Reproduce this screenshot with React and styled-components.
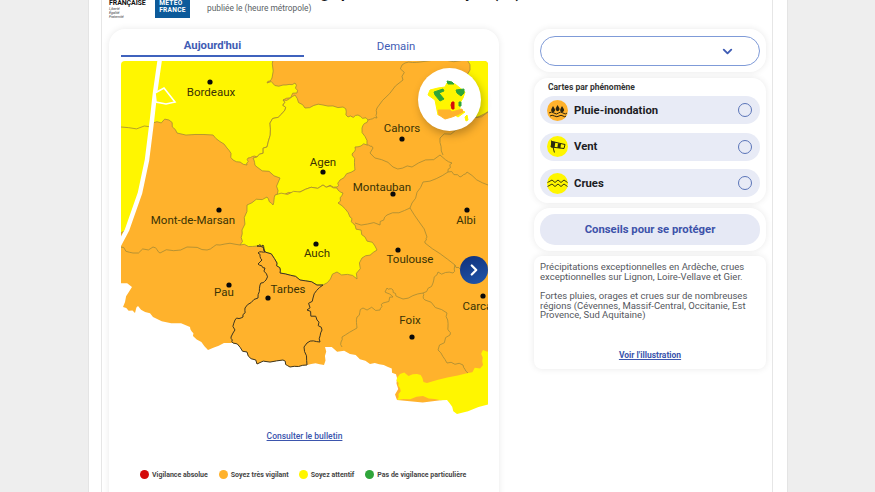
import React from "react";
import styled, { createGlobalStyle } from "styled-components";
import { ChevronDown, ChevronRight } from "lucide-react";

const YELLOW = "#fff600";
const ORANGE = "#ffb22c";
const LINE = "#a58a35";

const GlobalStyle = createGlobalStyle`
  html, body {
    margin: 0;
    height: 492px;
    overflow: hidden;
    background: #eeeeee;
    font-family: Roboto, "Liberation Sans", sans-serif;
  }
`;

const Page = styled.div`
  display: flow-root;
  width: 875px;
  height: 492px;
  overflow: hidden;
`;

const Sheet = styled.div`
  width: 700px;
  height: 501px;
  margin: -9px 0 0 88px;
  padding: 0 14px 0 12px;
  box-sizing: border-box;
  background: #fff;
  border-left: 1px solid #e4e4e4;
  border-right: 1px solid #e4e4e4;
`;

const Inner = styled.div`
  height: 100%;
  padding: 0 5px 0 7px;
  border-left: 1px solid #e6e6e6;
  border-right: 1px solid #e6e6e6;
`;

const Header = styled.header`
  display: flex;
  height: 29px;
  margin-bottom: 9px;
`;

const Republic = styled.div`
  width: 46px;
  color: #111;
  font-size: 7px;
  font-weight: 700;
  line-height: 8px;
  margin-top: 7.5px;
  letter-spacing: -0.1px;
`;

const Motto = styled.div`
  font-size: 3.8px;
  font-weight: 400;
  font-style: italic;
  line-height: 4.4px;
  color: #444;
`;

const MeteoLogo = styled.div`
  display: flex;
  flex-direction: column;
  justify-content: flex-end;
  align-items: center;
  width: 35px;
  height: 27px;
  margin-right: 17px;
  padding-bottom: 4.5px;
  box-sizing: border-box;
  background: #0c5a9a;
  color: #fff;
  font-size: 6.6px;
  font-weight: 700;
  line-height: 7px;
  letter-spacing: 0.3px;
`;

const Titles = styled.div`
  white-space: nowrap;
`;

const PageTitle = styled.div`
  height: 18px;
  margin-top: -3px;
  font-size: 15px;
  font-weight: 700;
  line-height: 11px;
  color: #111;
`;

const Published = styled.div`
  font-size: 8.4px;
  line-height: 11px;
  margin-top: -3px;
  color: #5a5f66;
`;

const Main = styled.main`
  display: grid;
  grid-template-columns: 390px 232px;
  column-gap: 35px;
  align-items: start;
`;

const Card = styled.section`
  background: #fff;
  border-radius: 14px;
  box-shadow: 0 0 7px rgba(0, 0, 0, 0.09);
`;

const MapCard = styled(Card)`
  height: 480px;
  padding: 0 11px 0 12px;
  border-radius: 16px;
`;

const Tabs = styled.div`
  display: grid;
  grid-template-columns: 183px 184px;
  height: 32px;
`;

const Tab = styled.div`
  display: flex;
  align-items: center;
  justify-content: center;
  height: 25px;
  margin-top: 3px;
  padding-top: 4px;
  box-sizing: border-box;
  font-size: 11.3px;
  font-weight: ${(p) => (p.$active ? 700 : 400)};
  color: #3f5cb4;
  border-bottom: ${(p) => (p.$active ? "2px solid #3f62bd" : "none")};
`;

const MapBox = styled.div`
  position: relative;
  width: 367px;
  height: 360px;
`;

const MapSvg = styled.svg`
  display: block;
  border-radius: 4px 4px 0 0;
`;

const CityLabel = styled.text`
  font-family: Roboto, sans-serif;
  font-size: 11.5px;
  fill: #3a3205;
`;

const MiniMap = styled.div`
  position: absolute;
  top: 7px;
  left: 297px;
  width: 63px;
  height: 63px;
  border-radius: 50%;
  background: #fff;
  box-shadow: 2px 4px 9px rgba(0, 0, 0, 0.25);
`;

const NextButton = styled.div`
  position: absolute;
  top: 195px;
  right: 0;
  display: flex;
  align-items: center;
  justify-content: center;
  width: 28px;
  height: 28px;
  border-radius: 50%;
  background: linear-gradient(160deg, #10307a, #2056ab);
  color: #fff;
`;

const BulletinLink = styled.a`
  display: block;
  margin-top: 9px;
  text-align: center;
  font-size: 8.5px;
  font-weight: 500;
  line-height: 12px;
  color: #3b55ad;
  text-decoration: underline;
`;

const Legend = styled.div`
  display: flex;
  margin: 28px 0 0 19px;
  white-space: nowrap;
`;

const LegendItem = styled.div`
  display: flex;
  align-items: center;
  gap: 3px;
  margin-right: ${(p) => p.$gap}px;
  font-size: 7px;
  font-weight: 700;
  color: #454545;
`;

const Dot = styled.span`
  width: 9px;
  height: 9px;
  border-radius: 50%;
  background: ${(p) => p.$color};
`;

const Side = styled.aside`
  display: flex;
  flex-direction: column;
  gap: 6px;
`;

const SelectCard = styled(Card)`
  height: 43px;
  padding: 7px 6px;
  box-sizing: border-box;
  border-radius: 16px;
`;

const SelectBox = styled.div`
  display: flex;
  align-items: center;
  justify-content: flex-end;
  height: 28px;
  padding-right: 24px;
  border: 1.5px solid #7f9bd8;
  border-radius: 15px;
  color: #3f5cb4;
`;

const PhenomenaCard = styled(Card)`
  height: 125px;
  padding: 4px 6px 0;
  box-sizing: border-box;
`;

const CardTitle = styled.div`
  margin-left: 8px;
  font-size: 8.5px;
  font-weight: 700;
  line-height: 11px;
  color: #333;
`;

const Rows = styled.div`
  display: flex;
  flex-direction: column;
  gap: 8.5px;
  margin-top: 3px;
`;

const Row = styled.div`
  display: flex;
  align-items: center;
  height: 28px;
  padding: 0 8px 0 7px;
  background: #e8ebf6;
  border-radius: 14px;
  font-size: 11.3px;
  font-weight: 700;
  color: #1c1c24;
`;

const Glyph = styled.svg`
  flex: none;
  margin-right: 6px;
`;

const RowName = styled.span`
  flex: 1;
`;

const Radio = styled.span`
  width: 12px;
  height: 12px;
  border: 1px solid #5a74b8;
  border-radius: 50%;
`;

const AdviceCard = styled(Card)`
  height: 43px;
  margin-top: -1px;
  padding: 6px;
  box-sizing: border-box;
  border-radius: 16px;
`;

const AdviceButton = styled.div`
  display: flex;
  align-items: center;
  justify-content: center;
  height: 31px;
  border-radius: 15px;
  background: #e6e9f5;
  font-size: 11.3px;
  font-weight: 700;
  color: #3d52aa;
`;

const TextCard = styled(Card)`
  height: 113px;
  margin-top: -1px;
  padding: 6px 6px 0;
  box-sizing: border-box;
  border-radius: 8px;
`;

const Paragraph = styled.p`
  margin: 0 0 9.5px;
  font-size: 9.5px;
  line-height: 9.7px;
  color: #55585e;
`;

const IllustrationLink = styled.a`
  display: block;
  margin-top: 29px;
  text-align: center;
  font-size: 8.5px;
  font-weight: 700;
  line-height: 12px;
  color: #3b55ad;
  text-decoration: underline;
`;

// small repeatable bumps so the borders don't look like straight cuts
const frac = (n) => n - Math.floor(n);
const wiggle = (list, closed = true) => {
  const out = [];
  list.forEach((a, i) => {
    out.push(a);
    const b = list[(i + 1) % list.length];
    if (!closed && i === list.length - 1) return;
    const flip = a[0] > b[0] || (a[0] === b[0] && a[1] > b[1]);
    const [p, q] = flip ? [b, a] : [a, b];
    const dx = q[0] - p[0];
    const dy = q[1] - p[1];
    const len = Math.hypot(dx, dy);
    if (len < 6) return;
    const steps = [0.25, 0.5, 0.75].map((t) => {
      const r = frac(Math.sin(p[0] * 12.9 + p[1] * 78.2 + q[0] * 37.7 + q[1] * 9.1 + t * 7) * 43758) - 0.5;
      const size = r * Math.min(len * 0.3, 4);
      return [p[0] + dx * t - (dy / len) * size, p[1] + dy * t + (dx / len) * size];
    });
    out.push(...(flip ? steps.reverse() : steps));
  });
  return out;
};

const pts = (list) => list.map((p) => p.join(",")).join(" ");

const land = [
  [158, 50], [500, 50], [500, 402], [397, 400], [397, 378], [388, 367], [370, 364], [350, 354], [325, 347],
  [324, 365], [307, 365], [290, 367], [283, 360], [257, 364], [247, 352], [233, 343], [230, 343], [208, 350],
  [193, 336], [190, 327], [153, 317], [138, 306], [135, 313], [123, 307], [132, 287], [110, 279],
  [110, 243], [127, 230], [140, 193], [147, 160], [152, 120], [155, 93]
];

const gironde = [
  [110, 50], [275, 50], [272, 78], [267, 83], [283, 85], [295, 83], [297, 93], [283, 100], [285, 110],
  [270, 123], [267, 147], [257, 157], [248, 158], [247, 165], [233, 160], [227, 148], [213, 135],
  [177, 133], [169, 120], [153, 123], [147, 160], [140, 193], [127, 230], [110, 245]
];

const lotGaronne = [
  [295, 95], [305, 108], [323, 105], [343, 107], [348, 117], [358, 115], [368, 120], [362, 128],
  [367, 145], [355, 147], [352, 155], [355, 170], [340, 180], [337, 187], [323, 185], [300, 192],
  [277, 195], [280, 178], [257, 167], [253, 158], [257, 157], [267, 147], [270, 123], [285, 110],
  [283, 100]
];

const gers = [
  [247, 205], [267, 197], [273, 205], [275, 195], [300, 192], [323, 185], [337, 188], [343, 193],
  [338, 203], [350, 217], [355, 225], [365, 237], [377, 250], [362, 258], [357, 279], [337, 272],
  [323, 285], [300, 280], [280, 273], [277, 263], [263, 247], [257, 246], [240, 245], [242, 230]
];

const south = [
  [397, 378], [400, 374], [417, 374], [427, 383], [468, 373], [483, 365], [483, 350], [500, 350],
  [500, 400], [457, 414], [447, 400], [423, 396], [397, 400], [400, 388]
];

const northEast = [[465, 50], [500, 50], [500, 108], [470, 118], [460, 100], [470, 70]];

const tarbes = [
  [257, 246], [263, 245], [265, 252], [258, 253], [262, 260], [258, 264], [265, 268], [266, 280],
  [260, 285], [258, 298], [245, 308], [243, 317], [235, 320], [233, 333], [231, 337], [233, 343],
  [247, 352], [257, 364], [283, 360], [290, 367], [307, 365], [304, 347], [307, 343], [320, 342],
  [322, 330], [317, 320], [307, 310], [313, 298], [323, 285], [300, 280], [280, 273], [277, 263],
  [263, 247]
];

const borders = [
  [[120, 247], [133, 253], [153, 247], [160, 253], [187, 247], [207, 250], [220, 245], [240, 245]],
  [[368, 120], [377, 118], [377, 108], [403, 80], [402, 65], [405, 63], [420, 62], [465, 60]],
  [[367, 145], [373, 148], [370, 153], [393, 167], [412, 167], [440, 155], [452, 163], [448, 172], [460, 177], [467, 172], [488, 185]],
  [[440, 138], [443, 155]],
  [[440, 138], [460, 127], [488, 112]],
  [[448, 172], [423, 182], [412, 203], [410, 208], [387, 215], [380, 225], [355, 223]],
  [[410, 208], [427, 237], [425, 243], [455, 265], [453, 273], [438, 272], [433, 283], [423, 293], [403, 299], [398, 297], [393, 290], [387, 288], [385, 292], [393, 297], [383, 303], [380, 310], [363, 308], [357, 317], [357, 328], [342, 337], [342, 347]],
  [[423, 293], [425, 300], [447, 313], [448, 327], [450, 335], [438, 350], [447, 363], [463, 365], [468, 373]],
  [[455, 265], [462, 271]],
  [[121, 127], [152, 127]]
];

const cities = [
  { name: "Bordeaux", dot: [210, 82], label: [211, 96] },
  { name: "Cahors", dot: [402, 139], label: [402, 132] },
  { name: "Agen", dot: [323, 172], label: [323, 166] },
  { name: "Montauban", dot: [393, 194], label: [382, 191] },
  { name: "Mont-de-Marsan", dot: [219, 210], label: [193, 224] },
  { name: "Albi", dot: [467, 210], label: [466, 224] },
  { name: "Auch", dot: [316, 244], label: [317, 257] },
  { name: "Toulouse", dot: [398, 250], label: [410, 263] },
  { name: "Pau", dot: [229, 285], label: [224, 296] },
  { name: "Tarbes", dot: [268, 298], label: [288, 293] },
  { name: "Foix", dot: [412, 337], label: [410, 324] },
  { name: "Carcassonne", dot: [483, 296], label: [496, 310] },
  { name: "Périgueux", dot: [338, 40], label: [344, 59] },
  { name: "Perpignan", dot: [510, 360], label: [514, 379] }
];

const legend = [
  { color: "#d40b0b", label: "Vigilance absolue", gap: 11 },
  { color: ORANGE, label: "Soyez très vigilant", gap: 10 },
  { color: "#fff600", label: "Soyez attentif", gap: 11 },
  { color: "#2fa53a", label: "Pas de vigilance particulière", gap: 0 }
];

const WarningMap = () => (
  <MapSvg width="367" height="360" viewBox="121 61 367 360">
    <rect x="121" y="61" width="367" height="360" fill="#fff" />
    <polygon points={pts(wiggle(land))} fill={ORANGE} />
    {[gironde, lotGaronne, gers, northEast].map((shape, i) => (
      <polygon key={i} points={pts(wiggle(shape))} fill={YELLOW} stroke={LINE} strokeWidth="0.8" />
    ))}
    <polygon points={pts(wiggle(south))} fill={YELLOW} />
    {borders.map((line, i) => (
      <polyline key={i} points={pts(wiggle(line, false))} fill="none" stroke={LINE} strokeWidth="0.8" />
    ))}
    <polygon points={pts(wiggle(tarbes))} fill={ORANGE} stroke="#3c3520" strokeWidth="1" />
    <polyline points="160,58 155,93 152,120 147,160 140,193 127,230 119,245" fill="none" stroke="#fff" strokeWidth="4.5" strokeLinejoin="round" />
    <path d="M155 93 L164 88 L175 102 L166 104 L156 102 Z" fill={YELLOW} stroke="#fff" strokeWidth="1.6" />
    {cities.map((c) => (
      <g key={c.name}>
        <circle cx={c.dot[0]} cy={c.dot[1]} r="2.6" fill="#0a0a0a" />
        <CityLabel x={c.label[0]} y={c.label[1]} textAnchor="middle">{c.name}</CityLabel>
      </g>
    ))}
  </MapSvg>
);

const MiniFrance = () => (
  <svg width="63" height="63" viewBox="0 0 63 63" strokeLinejoin="round">
    <polygon points="29,15 37,16 47,24 45,30 42,35 42,42 47,44 40,49 37,47 20,47 17,32 10,27 12,22 20,20 27,19" fill={YELLOW} stroke={YELLOW} />
    <polygon points="29,13 34,14 36,16 30,16" fill="#2fa53a" stroke="#2fa53a" />
    <polygon points="16,24 25,21 26,23 21,25 26,31 22,33 17,27" fill="#2fa53a" stroke="#2fa53a" />
    <polygon points="38,22 46,21 46,25 43,28 39,25" fill="#2fa53a" stroke="#2fa53a" />
    <polygon points="41,34 43,34 43,38 41,38" fill="#2fa53a" stroke="#2fa53a" />
    <polygon points="20,42 32,42 34,44 44,41 45,44 39,47 34,49 27,51 21,47" fill={ORANGE} stroke={ORANGE} />
    <polygon points="34,34 36,34 36,41 34,41 33,37" fill="#d40b0b" stroke="#d40b0b" />
    <polygon points="49,47 50,52 48,53 47,49" fill={YELLOW} stroke={YELLOW} />
  </svg>
);

const RainIcon = () => (
  <Glyph width="21" height="21" viewBox="0 0 21 21">
    <circle cx="10.5" cy="10.5" r="10.5" fill={ORANGE} />
    <path d="M6 6 L7.8 9 A2 2 0 1 1 4.4 9 Z M10.5 5 L12.3 8 A2 2 0 1 1 8.9 8 Z M15 6 L16.8 9 A2 2 0 1 1 13.4 9 Z" fill="#2a2410" />
    <path d="M2 13 Q4.5 11 7 13 T11.5 13 T16 13 T20 13 M3 16 Q5 14.5 7.5 16 T12 16 T16 16 T19 16" fill="none" stroke="#2a2410" strokeWidth="1" />
  </Glyph>
);

const WindIcon = () => (
  <Glyph width="21" height="21" viewBox="0 0 21 21">
    <circle cx="10.5" cy="10.5" r="10.5" fill={YELLOW} />
    <path d="M5 5.5 L18 8.5 L17 12.5 L4 11 Z" fill={YELLOW} stroke="#2a2a10" strokeWidth="1" />
    <path d="M4.6 5.5 L8.4 5.9 L7.6 11.6 L4 11 Z M11 7.2 L14 7.8 L13.4 12.2 L10.4 11.8 Z" fill="#2a2a10" />
    <path d="M4.4 4.5 L7.4 16.5" stroke="#2a2a10" strokeWidth="1" fill="none" />
  </Glyph>
);

const FloodIcon = () => (
  <Glyph width="21" height="21" viewBox="0 0 21 21">
    <circle cx="10.5" cy="10.5" r="10.5" fill={YELLOW} />
    <path d="M0.5 9.5 L5 7 L8 9.5 L11 7 L14 9.5 L17 7 L20.5 9.5 M0.5 13.5 L5 11 L8 13.5 L11 11 L14 13.5 L17 11 L20.5 13.5" fill="none" stroke="#3a3a10" strokeWidth="1" />
  </Glyph>
);

const App = () => (
  <Page>
    <GlobalStyle />
    <Sheet>
      <Inner>
        <Header>
          <Republic>
            FRANÇAISE
            <Motto>Liberté<br />Égalité<br />Fraternité</Motto>
          </Republic>
          <MeteoLogo>METEO<br />FRANCE</MeteoLogo>
          <Titles>
            <PageTitle>Alerte météo rouge pour l'Ardèche et Lyon (07)</PageTitle>
            <Published>publiée le (heure métropole)</Published>
          </Titles>
        </Header>
        <Main>
          <MapCard>
            <Tabs>
              <Tab $active>Aujourd'hui</Tab>
              <Tab>Demain</Tab>
            </Tabs>
            <MapBox>
              <WarningMap />
              <MiniMap><MiniFrance /></MiniMap>
              <NextButton><ChevronRight size={18} strokeWidth={3} /></NextButton>
            </MapBox>
            <BulletinLink>Consulter le bulletin</BulletinLink>
            <Legend>
              {legend.map((item) => (
                <LegendItem key={item.label} $gap={item.gap}>
                  <Dot $color={item.color} />
                  {item.label}
                </LegendItem>
              ))}
            </Legend>
          </MapCard>
          <Side>
            <SelectCard>
              <SelectBox><ChevronDown size={15} strokeWidth={3} /></SelectBox>
            </SelectCard>
            <PhenomenaCard>
              <CardTitle>Cartes par phénomène</CardTitle>
              <Rows>
                <Row><RainIcon /><RowName>Pluie-inondation</RowName><Radio /></Row>
                <Row><WindIcon /><RowName>Vent</RowName><Radio /></Row>
                <Row><FloodIcon /><RowName>Crues</RowName><Radio /></Row>
              </Rows>
            </PhenomenaCard>
            <AdviceCard>
              <AdviceButton>Conseils pour se protéger</AdviceButton>
            </AdviceCard>
            <TextCard>
              <Paragraph>Précipitations exceptionnelles en Ardèche, crues exceptionnelles sur Lignon, Loire-Vellave et Gier.</Paragraph>
              <Paragraph>Fortes pluies, orages et crues sur de nombreuses régions (Cévennes, Massif-Central, Occitanie, Est Provence, Sud Aquitaine)</Paragraph>
              <IllustrationLink>Voir l'illustration</IllustrationLink>
            </TextCard>
          </Side>
        </Main>
      </Inner>
    </Sheet>
  </Page>
);

export default App;
